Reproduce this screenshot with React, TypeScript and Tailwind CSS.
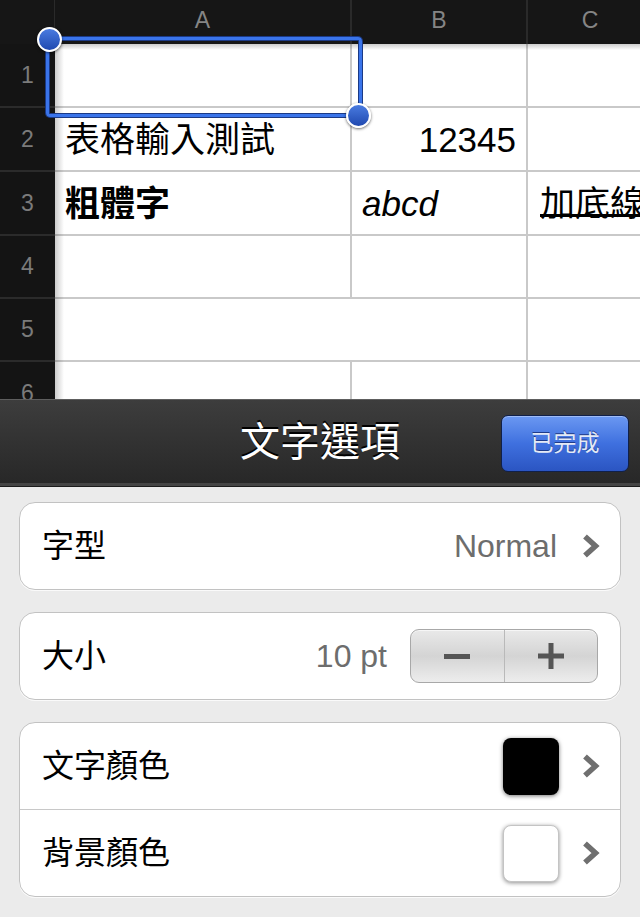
import React from 'react';

const Chevron: React.FC = () => (
    <svg width="18" height="26" viewBox="0 0 18 26" className="shrink-0">
        <polyline points="3,3.5 13.5,13 3,22.5" fill="none" stroke="#6f6f6f" strokeWidth={5.5} strokeLinejoin="miter" />
    </svg>
);

const Handle: React.FC<{ className: string }> = ({ className }) => (
    <div className={`absolute w-[25px] h-[25px] rounded-full border-2 border-white bg-linear-to-b from-[#4a7be0] to-[#2049b0] shadow-[0_1px_3px_rgba(0,0,0,0.6)] ${className}`} />
);

const RowHead: React.FC<{ n: number; h: string }> = ({ n, h }) => (
    <div className={`w-[55px] ${h} shrink-0 flex items-center justify-center bg-[#141414] border-b-2 border-[#2b2b2b] text-[23px] text-[#7b7b7b]`}>
        {n}
    </div>
);

const cellA = 'w-[297px] shrink-0 border-b-2 border-r-2 border-[#c9c9c9]';
const cellB = 'w-[176px] shrink-0 border-b-2 border-r-2 border-[#c9c9c9]';
const cellC = 'flex-1 min-w-0 overflow-hidden border-b-2 border-[#c9c9c9]';

const Sheet: React.FC = () => (
    <div className="relative h-[399px] shrink-0 overflow-hidden bg-white">
        {/* column header */}
        <div className="flex h-[44px] bg-[#161616] text-[23px] text-[#858585]">
            <div className="w-[55px] shrink-0 border-r border-[#2a2a2a]" />
            <div className="w-[297px] shrink-0 flex items-center justify-center pb-[3px] border-r-2 border-[#2a2a2a]">A</div>
            <div className="w-[176px] shrink-0 flex items-center justify-center pb-[3px] border-r-2 border-[#2a2a2a]">B</div>
            <div className="flex-1 flex items-center justify-center pb-[3px] pl-[12px]">C</div>
        </div>

        <div className="flex">
            <RowHead n={1} h="h-[64px]" />
            <div className={`${cellA} h-[64px]`} />
            <div className={`${cellB} h-[64px]`} />
            <div className={`${cellC} h-[64px]`} />
        </div>
        <div className="flex text-[35px] text-black leading-none">
            <RowHead n={2} h="h-[64px]" />
            <div className={`${cellA} h-[64px] flex items-center pl-[10px]`}>表格輸入測試</div>
            <div className={`${cellB} h-[64px] flex items-center justify-end pr-[10px]`}>12345</div>
            <div className={`${cellC} h-[64px]`} />
        </div>
        <div className="flex text-[35px] text-black leading-none">
            <RowHead n={3} h="h-[64px]" />
            <div className={`${cellA} h-[64px] flex items-center pl-[10px] font-bold`}>粗體字</div>
            <div className={`${cellB} h-[64px] flex items-center pl-[10px] italic`}>abcd</div>
            <div className={`${cellC} h-[64px] flex items-center pl-[12px] whitespace-nowrap`}>
                <span className="underline underline-offset-[-2px]">加底線</span>
            </div>
        </div>
        <div className="flex">
            <RowHead n={4} h="h-[63px]" />
            <div className={`${cellA} h-[63px]`} />
            <div className={`${cellB} h-[63px]`} />
            <div className={`${cellC} h-[63px]`} />
        </div>
        <div className="flex">
            <RowHead n={5} h="h-[63px]" />
            <div className="w-[473px] shrink-0 h-[63px] border-b-2 border-r-2 border-[#c9c9c9]" />
            <div className={`${cellC} h-[63px]`} />
        </div>
        <div className="flex">
            <RowHead n={6} h="h-[64px]" />
            <div className="w-[297px] shrink-0 h-[64px] border-r-2 border-[#c9c9c9]" />
            <div className="w-[176px] shrink-0 h-[64px] border-r-2 border-[#c9c9c9]" />
            <div className="flex-1 h-[64px]" />
        </div>

        {/* shadows cast by headers */}
        <div className="absolute left-[55px] top-[44px] bottom-0 w-[9px] bg-linear-to-r from-black/20 to-transparent" />
        <div className="absolute left-[55px] right-0 top-[44px] h-[6px] bg-linear-to-b from-black/20 to-transparent" />

        {/* selection */}
        <div className="absolute left-[46px] top-[37px] w-[316px] h-[80px] rounded-[4px] border-[3px] border-[#3a74ea] shadow-[0_0_0_1px_#1b3a86,inset_0_0_0_1px_#1b3a86]" />
        <Handle className="left-[37px] top-[27px]" />
        <Handle className="left-[346px] top-[103px]" />
    </div>
);

const Toolbar: React.FC = () => (
    <div className="h-[88px] shrink-0 grid grid-cols-[1fr_auto_1fr] items-center bg-linear-to-b from-[#3d3d3d] to-[#272727] border-t border-[#5e5e5e] border-b border-b-[#1c1c1c] shadow-[inset_0_-3px_0_#454545]">
        <div />
        <div className="text-[40px] text-white font-normal leading-none pb-[2px] [text-shadow:0_-2px_0_#000]">文字選項</div>
        <div className="flex justify-end pr-[11px]">
            <button className="w-[128px] h-[57px] rounded-[7px] border border-[#10204a] bg-linear-to-b from-[#6b98f2] via-[#3f70df] to-[#2b55c2] shadow-[inset_0_1px_0_rgba(255,255,255,0.35)] text-[23px] text-[#e4eaf6] [text-shadow:0_-1px_0_#1e3b8a]">
                已完成
            </button>
        </div>
    </div>
);

const Group: React.FC<{ children: React.ReactNode }> = ({ children }) => (
    <div className="bg-white border border-[#c2c2c2] rounded-[16px] shadow-[0_1px_0_#fafafa] overflow-hidden">
        {children}
    </div>
);

const Row: React.FC<{ label: string; children: React.ReactNode; divider?: boolean }> = ({ label, children, divider }) => (
    <div className={`flex items-center pl-[22px] pr-[20px] ${divider ? 'border-t border-[#c8c8c8] h-[87px]' : 'h-[86px]'}`}>
        <span className="text-[32px] text-black leading-none">{label}</span>
        <div className="flex-1" />
        {children}
    </div>
);

export default function App() {
    return (
        <div className="w-[640px] h-[917px] flex flex-col overflow-hidden bg-[#ebebeb] font-['Liberation_Sans','Noto_Sans_CJK_TC',sans-serif]">
            <Sheet />
            <Toolbar />
            <div className="flex flex-col gap-[22px] px-[19px] pt-[15px]">
                <Group>
                    <Row label="字型">
                        <span className="text-[32px] text-[#6d6d6d] leading-none mr-[25px]">Normal</span>
                        <Chevron />
                    </Row>
                </Group>
                <Group>
                    <Row label="大小">
                        <span className="text-[32px] text-[#6d6d6d] leading-none mr-[23px]">10 pt</span>
                        <div className="w-[188px] h-[54px] flex rounded-[9px] border border-[#a8a8a8] bg-linear-to-b from-[#e9e9e9] via-[#d4d4d4] to-[#ededed] shadow-[inset_0_1px_0_#f6f6f6] mr-[2px]">
                            <div className="flex-1 flex items-center justify-center border-r border-[#b9b9b9]">
                                <div className="w-[26px] h-[5px] bg-[#555]" />
                            </div>
                            <div className="flex-1 flex items-center justify-center">
                                <svg width="26" height="26" viewBox="0 0 26 26">
                                    <rect x="10.5" y="0" width="5" height="26" fill="#555" />
                                    <rect x="0" y="10.5" width="26" height="5" fill="#555" />
                                </svg>
                            </div>
                        </div>
                    </Row>
                </Group>
                <Group>
                    <Row label="文字顏色">
                        <div className="w-[56px] h-[57px] rounded-[8px] bg-black shadow-[0_1px_4px_rgba(0,0,0,0.55)] mr-[23px]" />
                        <Chevron />
                    </Row>
                    <Row label="背景顏色" divider>
                        <div className="w-[56px] h-[57px] rounded-[8px] bg-white border border-[#c4c4c4] shadow-[0_1px_4px_rgba(0,0,0,0.45)] mr-[23px]" />
                        <Chevron />
                    </Row>
                </Group>
            </div>
        </div>
    );
}
